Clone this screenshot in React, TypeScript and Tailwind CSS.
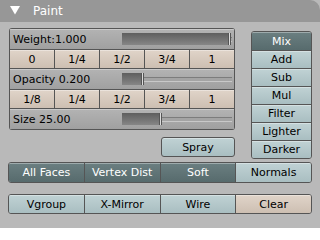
import React from "react";

const tan = "bg-gradient-to-b from-[#e0d4c9] to-[#cdbfb2] text-black";
const blue = "bg-gradient-to-b from-[#c0d2d4] to-[#a9bec1] text-black";
const dark = "bg-gradient-to-b from-[#6b7f81] to-[#576b6d] text-white";

function Row({ items, cls, className = "" }: { items: string[]; cls: string[]; className?: string }) {
    return (
        <div className={"flex border border-[#555] rounded-[3px] overflow-hidden " + className}>
            {items.map((t, i) => (
                <div
                    key={t}
                    className={
                        "flex-1 flex items-center justify-center shadow-[inset_0_1px_0_rgba(255,255,255,0.35)] " +
                        (i > 0 ? "border-l border-[#555] " : "") +
                        cls[i]
                    }
                >
                    {t}
                </div>
            ))}
        </div>
    );
}

function Slider({ label, fill }: { label: string; fill: string }) {
    return (
        <div className="h-[20px] flex items-center bg-gradient-to-b from-[#b3b3b3] to-[#a0a0a0] border-x border-[#555] shadow-[inset_0_1px_0_rgba(255,255,255,0.3)]">
            <span className="pl-[3px]">{label}</span>
            <div className="ml-auto mr-[2px] w-[110px] h-[12px] flex items-center">
                <div className={"h-full bg-gradient-to-b from-[#5e5e5e] to-[#868686] " + fill} />
                <div className="h-full w-[3px] border-x border-[#555] bg-[#dcdcdc]" />
                <div className="flex-1 h-[5px] border-t border-[#7c7c7c] border-b border-b-[#c9c9c9] bg-[#a4a4a4]" />
            </div>
        </div>
    );
}

export default function App() {
    const nums1 = ["0", "1/4", "1/2", "3/4", "1"];
    const nums2 = ["1/8", "1/4", "1/2", "3/4", "1"];
    const modes = ["Mix", "Add", "Sub", "Mul", "Filter", "Lighter", "Darker"];
    return (
        <div className="w-[320px] h-[228px] bg-[#b9b9b9] overflow-hidden text-[11px] leading-none" style={{ fontFamily: '"DejaVu Sans", sans-serif' }}>
            {/* header */}
            <div className="h-[22px] bg-[#979797] rounded-tr-[10px] flex items-center pl-[10px] text-white">
                <svg width="10" height="9" viewBox="0 0 10 9" className="mb-[1px]">
                    <polygon points="0,0 10,0 5,8.5" fill="#fff" />
                </svg>
                <span className="ml-[13px] text-[12px]">Paint</span>
            </div>

            <div className="px-[8px] pt-[6px]">
                <div className="flex items-start">
                    {/* left column */}
                    <div className="ml-[1px] w-[226px] flex flex-col">
                        <div className="border-t border-[#555] rounded-t-[3px] overflow-hidden">
                            <Slider label="Weight:1.000" fill="w-[106px]" />
                        </div>
                        <div className="flex h-[20px] border border-[#555]">
                            {nums1.map((t, i) => (
                                <div key={i} className={"flex-1 flex items-center justify-center shadow-[inset_0_1px_0_rgba(255,255,255,0.35)] " + (i > 0 ? "border-l border-[#555] " : "") + tan}>{t}</div>
                            ))}
                        </div>
                        <Slider label="Opacity 0.200" fill="w-[19px]" />
                        <div className="flex h-[20px] border border-[#555]">
                            {nums2.map((t, i) => (
                                <div key={i} className={"flex-1 flex items-center justify-center shadow-[inset_0_1px_0_rgba(255,255,255,0.35)] " + (i > 0 ? "border-l border-[#555] " : "") + tan}>{t}</div>
                            ))}
                        </div>
                        <div className="border-b border-[#555] rounded-b-[3px] overflow-hidden">
                            <Slider label="Size 25.00" fill="w-[37px]" />
                        </div>
                        <div className="mt-[7px] ml-auto w-[74px] h-[20px] flex items-center justify-center border border-[#555] rounded-[3px] shadow-[inset_0_1px_0_rgba(255,255,255,0.35)] bg-gradient-to-b from-[#c0d2d4] to-[#a9bec1]">
                            Spray
                        </div>
                    </div>

                    {/* blend modes */}
                    <div className="ml-[16px] mt-[3px] w-[61px] flex flex-col border border-[#555] rounded-[3px] overflow-hidden">
                        {modes.map((m, i) => (
                            <div
                                key={m}
                                className={
                                    "h-[18px] flex items-center justify-center shadow-[inset_0_1px_0_rgba(255,255,255,0.35)] " +
                                    (i > 0 ? "border-t border-[#555] " : "") +
                                    (i === 0 ? dark : blue)
                                }
                            >
                                {m}
                            </div>
                        ))}
                    </div>
                </div>

                <Row
                    className="mt-[3px] h-[21px]"
                    items={["All Faces", "Vertex Dist", "Soft", "Normals"]}
                    cls={[dark, dark, dark, blue]}
                />
                <Row
                    className="mt-[11px] h-[20px]"
                    items={["Vgroup", "X-Mirror", "Wire", "Clear"]}
                    cls={[blue, blue, blue, tan]}
                />
            </div>
        </div>
    );
}
